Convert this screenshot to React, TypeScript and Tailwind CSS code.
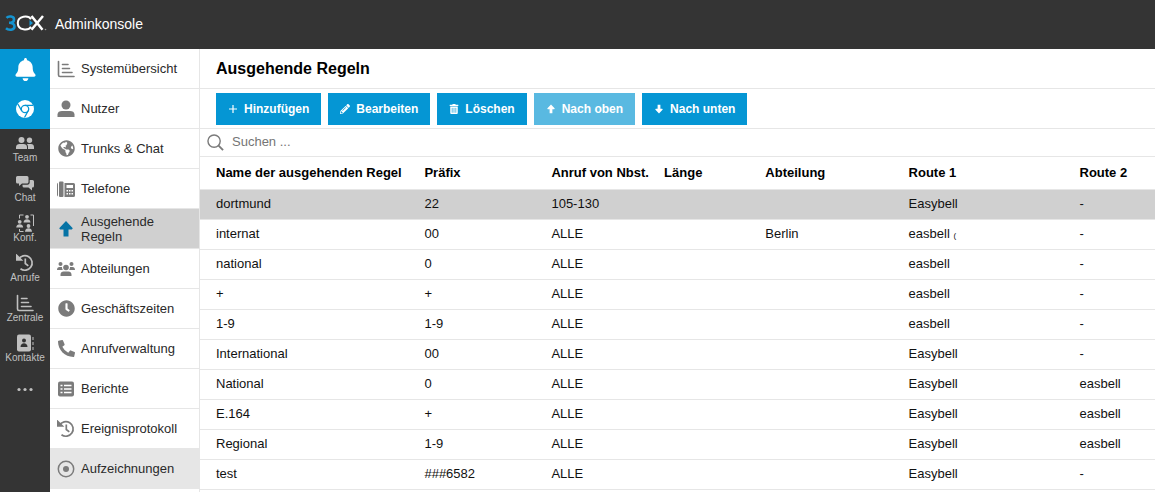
import type { ReactNode } from "react";
import { FaBell, FaClock, FaPhoneAlt, FaTrashAlt, FaPencilAlt, FaGlobeAmericas } from "react-icons/fa";

type IconProps = { className?: string };

function Logo() {
  return (
    <svg viewBox="0 0 42 18" className="h-[18px] w-[42px]" fill="none">
      <path d="M1.500 2.800C3.500 .8 9 1 9 4.500c0 2.500-2.300 3.300-5 3.300 3 0 5.500 1 5.500 3.700C9.500 15.500 3.500 15.500 1 13.300" stroke="#1593cf" strokeWidth="2.600" />
      <path d="M26 4.300C23.500 0 12.800 .5 12.800 8c0 7.500 10.700 8 13.200 3.700" stroke="#fff" strokeWidth="2" />
      <path d="M26.500 1l11 13.700M38 1L26.500 14.700" stroke="#fff" strokeWidth="2.500" />
      <path d="M24.500 5l3.500 3-3.500 3z" fill="#1593cf" />
      <circle cx="40.500" cy="14.500" r=".8" fill="#999" />
    </svg>
  );
}

function ChartIcon({ className }: IconProps) {
  return (
    <svg viewBox="0 0 18 18" className={className} fill="none" stroke="currentColor" strokeWidth="1.600" strokeLinecap="round">
      <path d="M1.500 1.500v13.500a1.500 1.500 0 0 0 1.500 1.500H17M5.500 4.500h5.500M5.500 8.500h7M5.500 12.500h9.500" />
    </svg>
  );
}

function ChromeIcon({ className }: IconProps) {
  return (
    <svg viewBox="0 0 18 18" className={className} fill="none">
      <circle cx="9" cy="9" r="9" fill="#fff" />
      <circle cx="9" cy="9" r="3.700" stroke="#0596d4" strokeWidth="1.300" />
      <path d="M9 5.300h8M5.800 10.800L1.800 4M12.200 10.800L8.500 17.500" stroke="#0596d4" strokeWidth="1.300" />
    </svg>
  );
}

function UserIcon({ className }: IconProps) {
  return (
    <svg viewBox="0 0 18 18" className={className} fill="currentColor">
      <circle cx="9" cy="5" r="4.500" />
      <path d="M.5 17v-2.500C.5 12 2.500 11 5 11h8c2.500 0 4.500 1 4.500 3.500V17z" />
    </svg>
  );
}

function TeamIcon({ className }: IconProps) {
  return (
    <svg viewBox="0 0 18 18" className={className} fill="currentColor">
      <circle cx="5.500" cy="6" r="3" />
      <circle cx="13.500" cy="6.300" r="2.700" />
      <path d="M0 15v-1.800C0 11 1.800 10 3.500 10h4c2 0 3.500 1 3.500 3.200V15zM12 15v-2c0-1.300-.5-2.300-1.200-3H15c1.800 0 3 1 3 3v2z" />
    </svg>
  );
}

function ChatIcon({ className }: IconProps) {
  return (
    <svg viewBox="0 0 18 18" className={className} fill="currentColor">
      <path d="M1.500 2H11a1.500 1.500 0 0 1 1.500 1.500V8A1.500 1.500 0 0 1 11 9.500H6L3 12V9.500H1.500A1.500 1.500 0 0 1 0 8V3.500A1.500 1.500 0 0 1 1.500 2z" />
      <path d="M13.700 6h2.800A1.500 1.500 0 0 1 18 7.500V12a1.500 1.500 0 0 1-1.500 1.500H16v3l-3.500-3H8A1.500 1.500 0 0 1 6.500 12v-1.300H11.500c1.300 0 2.200-1 2.200-2.200z" />
    </svg>
  );
}

function ConferenceIcon({ className }: IconProps) {
  return (
    <svg viewBox="0 0 18 18" className={className} fill="currentColor">
      <circle cx="11" cy="2.800" r="1.900" />
      <path d="M7.500 8.500c0-4.500 7-4.500 7 0z" />
      <circle cx="3.700" cy="7.800" r="1.900" />
      <path d="M.2 13.500c0-4.500 7-4.500 7 0z" />
      <circle cx="12.500" cy="12" r="1.900" />
      <path d="M9 17.700c0-4.500 7-4.500 7 0z" />
      <path d="M3.500 4.500V1h4M14.500 1h3v11M3.500 15v2.500h4" fill="none" stroke="currentColor" />
    </svg>
  );
}

function ContactsIcon({ className }: IconProps) {
  return (
    <svg viewBox="0 0 18 18" className={className} fill="currentColor">
      <rect x="1" y=".5" width="14" height="17" rx="2" />
      <circle cx="8" cy="6.500" r="2" fill="#343434" />
      <path d="M4.500 13c0-5 7-5 7 0z" fill="#343434" />
      <path d="M16.500 3h1v3h-1zM16.500 8h1v3h-1zM16.500 13h1v3h-1z" />
    </svg>
  );
}

function PhoneIcon({ className }: IconProps) {
  return (
    <svg viewBox="0 0 18 18" className={className} fill="currentColor">
      <path d="M0 4.500a2 2 0 0 1 1-1.700V16.500a2 2 0 0 1-1-1.700z" />
      <rect x="2" y="1.500" width="4.500" height="15.500" rx="1" />
      <path fillRule="evenodd" d="M7.500 3H16.500A1.500 1.500 0 0 1 18 4.500v11A1.500 1.500 0 0 1 16.500 17h-9zM9.500 5v3H16V5zM9.500 10v1.500H11V10zm2.500 0v1.500h1.500V10zm2.500 0v1.500H16V10zm-5 3v1.500H11V13zm2.500 0v1.500h1.500V13zm2.500 0v1.500H16V13z" />
    </svg>
  );
}

function GroupIcon({ className }: IconProps) {
  return (
    <svg viewBox="0 0 18 18" className={className} fill="currentColor">
      <circle cx="3.500" cy="4" r="2" />
      <circle cx="14.500" cy="4" r="2" />
      <circle cx="9" cy="7.500" r="2.800" />
      <path d="M0 10c0-2 1-3 2.500-3H5c0 1.500.3 2.300 1 3zM18 10c0-2-1-3-2.500-3H13c0 1.500-.3 2.300-1 3zM3.500 16v-1.500c0-2 1.500-3 3-3h5c1.500 0 3 1 3 3V16z" />
    </svg>
  );
}

function ListIcon({ className }: IconProps) {
  return (
    <svg viewBox="0 0 16 16" className={className}>
      <rect width="16" height="15" y=".5" rx="2" fill="currentColor" />
      <path d="M2.500 4.500h2M2.500 8h2M2.500 11.500h2M6 4.500h7.500M6 8h7.500M6 11.500h7.500" stroke="#fff" strokeWidth="1.500" />
    </svg>
  );
}

function RecordIcon({ className }: IconProps) {
  return (
    <svg viewBox="0 0 18 18" className={className}>
      <circle cx="9" cy="9" r="7.700" fill="none" stroke="currentColor" strokeWidth="1.500" />
      <circle cx="9" cy="9" r="3" fill="currentColor" />
    </svg>
  );
}

function HistoryIcon({ className }: IconProps) {
  return (
    <svg viewBox="0 0 18 18" className={className} fill="none" stroke="currentColor" strokeWidth="1.700">
      <path d="M2.500 5.300A7.300 7.300 0 1 1 4.500 14.800M9.300 4.500v5l3 2.300" />
      <path d="M.8 1.500V6h4.500z" fill="currentColor" />
    </svg>
  );
}

function SearchIcon({ className }: IconProps) {
  return (
    <svg viewBox="0 0 18 18" className={className} fill="none" stroke="currentColor" strokeWidth="1.500">
      <circle cx="7.500" cy="7.500" r="6.500" />
      <path d="M12 12l5 5" strokeWidth="2" />
    </svg>
  );
}

function ArrowIcon({ className }: IconProps) {
  return (
    <svg viewBox="0 0 18 18" className={className} fill="currentColor">
      <path d="M9 1l6.800 7.200-1 1.300H11.500V16.500H6.500V9.500H3.200l-1-1.300z" />
    </svg>
  );
}

function PlusIcon({ className }: IconProps) {
  return (
    <svg viewBox="0 0 10 10" className={className} stroke="currentColor" strokeWidth="1.200">
      <path d="M5 1v8M1 5h8" />
    </svg>
  );
}

function DotsIcon({ className }: IconProps) {
  return (
    <svg viewBox="0 0 16 16" className={className} fill="currentColor">
      <circle cx="2" cy="8.500" r="1.600" />
      <circle cx="8" cy="8.500" r="1.600" />
      <circle cx="14" cy="8.500" r="1.600" />
    </svg>
  );
}

const railItems = [
  { label: "Team", icon: <TeamIcon className="size-[18px]" /> },
  { label: "Chat", icon: <ChatIcon className="size-[18px]" /> },
  { label: "Konf.", icon: <ConferenceIcon className="size-[18px]" /> },
  { label: "Anrufe", icon: <HistoryIcon className="size-[18px]" /> },
  { label: "Zentrale", icon: <ChartIcon className="size-[18px]" /> },
  { label: "Kontakte", icon: <ContactsIcon className="size-[18px]" /> },
];

const menuItems = [
  { label: "Systemübersicht", icon: <ChartIcon className="size-[18px]" /> },
  { label: "Nutzer", icon: <UserIcon className="size-[18px]" /> },
  { label: "Trunks & Chat", icon: <FaGlobeAmericas className="size-[17px]" /> },
  { label: "Telefone", icon: <PhoneIcon className="size-[18px]" /> },
  { label: "Ausgehende Regeln", icon: <ArrowIcon className="size-[18px] text-[#0673a5]" />, bg: "bg-[#d0d0d0]" },
  { label: "Abteilungen", icon: <GroupIcon className="size-[18px]" /> },
  { label: "Geschäftszeiten", icon: <FaClock className="size-[17px]" /> },
  { label: "Anrufverwaltung", icon: <FaPhoneAlt className="size-[17px]" /> },
  { label: "Berichte", icon: <ListIcon className="size-4" /> },
  { label: "Ereignisprotokoll", icon: <HistoryIcon className="size-[18px]" /> },
  { label: "Aufzeichnungen", icon: <RecordIcon className="size-[18px]" />, bg: "bg-[#e6e6e6]" },
];

const columns = ["Name der ausgehenden Regel", "Präfix", "Anruf von Nbst.", "Länge", "Abteilung", "Route 1", "Route 2"];

const rules: ReactNode[][] = [
  ["dortmund", "22", "105-130", "", "", "Easybell", "-"],
  ["internat", "00", "ALLE", "", "Berlin", <>easbell <small className="text-[8px]">(</small></>, "-"],
  ["national", "0", "ALLE", "", "", "easbell", "-"],
  ["+", "+", "ALLE", "", "", "easbell", "-"],
  ["1-9", "1-9", "ALLE", "", "", "easbell", "-"],
  ["International", "00", "ALLE", "", "", "Easybell", "-"],
  ["National", "0", "ALLE", "", "", "Easybell", "easbell"],
  ["E.164", "+", "ALLE", "", "", "Easybell", "easbell"],
  ["Regional", "1-9", "ALLE", "", "", "Easybell", "easbell"],
  ["test", "###6582", "ALLE", "", "", "Easybell", "-"],
];

function ActionButton({ icon, children, disabled }: { icon: ReactNode; children: ReactNode; disabled?: boolean }) {
  return (
    <button
      type="button"
      disabled={disabled}
      className="flex h-8 items-center gap-1.5 bg-[#0596d4] px-3 text-xs font-bold text-white disabled:bg-[#59b9e1]"
    >
      {icon}
      {children}
    </button>
  );
}

export default function App() {
  return (
    <div className="flex h-screen flex-col overflow-hidden bg-white font-['Liberation_Sans',Arial,sans-serif] text-[13px] text-[#111]">
      <header className="flex h-[49px] shrink-0 items-center gap-2 bg-[#343434] pb-0.5 pl-[5px] text-white">
        <Logo />
        <span className="text-sm">Adminkonsole</span>
      </header>
      <div className="flex min-h-0 grow">
        <nav className="w-[50px] shrink-0 bg-[#343434] text-[10px] text-[#c0c0c0]">
          <button type="button" aria-label="Benachrichtigungen" className="flex h-10 w-full items-center justify-center bg-[#0596d4] text-white">
            <FaBell className="size-[23px]" />
          </button>
          <button type="button" aria-label="Chrome" className="flex h-10 w-full items-center justify-center bg-[#0596d4]">
            <ChromeIcon className="size-[18px]" />
          </button>
          {railItems.map((item) => (
            <a key={item.label} href="#" className="flex h-10 flex-col items-center pt-[5px] leading-3">
              {item.icon}
              {item.label}
            </a>
          ))}
          <button type="button" aria-label="Mehr" className="flex h-10 w-full items-center justify-center">
            <DotsIcon className="size-4" />
          </button>
        </nav>
        <nav className="w-[150px] shrink-0 border-r border-[#e6e6e6] text-[#2a2a2a]">
          {menuItems.map((item) => (
            <a key={item.label} href="#" className={`flex h-10 items-center gap-1.5 border-b border-[#e6e6e6] pr-2 pl-[7px] leading-[15px] ${item.bg ?? ""}`}>
              <span className="flex w-[18px] shrink-0 justify-center text-[#7b7b7b]">{item.icon}</span>
              {item.label}
            </a>
          ))}
        </nav>
        <main className="min-w-0 grow">
          <h1 className="flex h-10 items-center border-b border-[#e6e6e6] pl-4 text-base font-bold text-black">Ausgehende Regeln</h1>
          <div className="flex h-10 items-center gap-[7px] border-b border-[#e6e6e6] pl-4">
            <ActionButton icon={<PlusIcon className="size-2.5" />}>Hinzufügen</ActionButton>
            <ActionButton icon={<FaPencilAlt className="size-2.5" />}>Bearbeiten</ActionButton>
            <ActionButton icon={<FaTrashAlt className="size-2.5" />}>Löschen</ActionButton>
            <ActionButton disabled icon={<ArrowIcon className="size-2.5" />}>Nach oben</ActionButton>
            <ActionButton icon={<ArrowIcon className="size-2.5 rotate-180" />}>Nach unten</ActionButton>
          </div>
          <label className="flex h-7 items-center gap-2 border-b border-[#e6e6e6] pl-[7px] text-[#7b7b7b]">
            <SearchIcon className="size-[17px]" />
            <input type="search" aria-label="Suchen" placeholder="Suchen ..." className="grow pb-0.5 outline-none placeholder:text-[#757575]" />
          </label>
          <table className="w-full table-fixed border-collapse text-left">
            <colgroup>
              <col className="w-[23.5%]" />
              <col className="w-[13.3%]" />
              <col className="w-[11.8%]" />
              <col className="w-[10.6%]" />
              <col className="w-[15%]" />
              <col className="w-[17.9%]" />
              <col />
            </colgroup>
            <thead>
              <tr className="h-8 border-b border-[#e6e6e6] text-black">
                {columns.map((name) => (
                  <th key={name} className="p-0 font-bold whitespace-nowrap first:pl-4">{name}</th>
                ))}
              </tr>
            </thead>
            <tbody>
              {rules.map((rule, i) => (
                <tr key={i} className={`h-[30px] border-b border-[#e6e6e6] ${i === 0 ? "bg-[#d0d0d0]" : ""}`}>
                  {rule.map((cell, j) => (
                    <td key={j} className="p-0 whitespace-nowrap first:pl-4">{cell}</td>
                  ))}
                </tr>
              ))}
            </tbody>
          </table>
        </main>
      </div>
    </div>
  );
}
